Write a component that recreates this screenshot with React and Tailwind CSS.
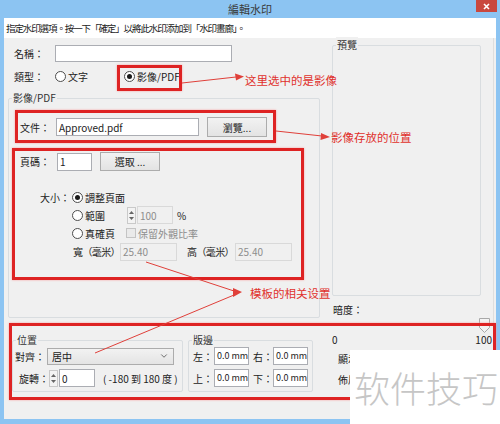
import { ChevronDown } from 'lucide-react';

const FONT = "font-['Noto_Sans_CJK_TC','Liberation_Sans',sans-serif]";

function Radio({ checked }) {
    return (
        <span className="w-[11px] h-[11px] rounded-full border border-[#4d4d4d] bg-white flex items-center justify-center shrink-0">
            {checked && <span className="w-[5px] h-[5px] rounded-full bg-[#1a1a1a]" />}
        </span>
    );
}

function Spinner() {
    return (
        <span className="w-[9px] h-[17px] border border-[#c9c9c9] bg-[#f3f3f3] flex flex-col items-center justify-center gap-[3px] shrink-0">
            <svg width="5" height="3" viewBox="0 0 5 3"><path d="M0 3 L2.5 0 L5 3 Z" fill="#666" /></svg>
            <svg width="5" height="3" viewBox="0 0 5 3"><path d="M0 0 L2.5 3 L5 0 Z" fill="#666" /></svg>
        </span>
    );
}

function Group({ label, className, children }) {
    return (
        <div className={`relative border border-[#d9dde0] rounded-[2px] ${className}`}>
            <span className="absolute left-[3px] top-[-9px] px-[1px] bg-[#f0f0f0] text-[10px] leading-[16px] text-[#333]">{label}</span>
            {children}
        </div>
    );
}

function Field({ w, children, disabled, tight }) {
    return (
        <span
            className={`h-[18px] border flex items-center shrink-0 overflow-hidden ${tight ? 'px-[2px] text-[9px]' : 'px-[2px] text-[10px]'} ${disabled ? 'bg-[#f0f0f0] border-[#d9d9d9] text-[#8d8d8d]' : 'bg-white border-[#abadb3] text-[#222]'}`}
            style={{ width: w }}
        >
            {children}
        </span>
    );
}

function Btn({ w, h, children }) {
    return (
        <span
            className="border border-[#acacac] bg-linear-to-b from-[#f2f2f2] to-[#e3e3e3] flex items-center justify-center text-[10px] text-[#222] shrink-0"
            style={{ width: w, height: h }}
        >
            {children}
        </span>
    );
}

function RedBox({ className }) {
    return <div className={`absolute border-[3px] border-[#de2323] shadow-[0_0_2px_#f7a0a0] pointer-events-none ${className}`} />;
}

export default function App() {
    return (
        <div className={`relative w-[500px] h-[424px] bg-[#8cc4f2] overflow-hidden whitespace-nowrap ${FONT} text-[#222]`}>
            {/* title bar */}
            <div className="relative h-[18px] flex items-center justify-center text-[11px] text-[#3a3a3a]">
                編輯水印
                <span className="absolute right-[3px] top-0 w-[21px] h-[12px] bg-[#c9483e] flex items-center justify-center">
                    <svg width="7" height="7" viewBox="0 0 7 7"><path d="M1 1 L6 6 M6 1 L1 6" stroke="#fff" strokeWidth="1.6" /></svg>
                </span>
            </div>

            <div className="mx-[4px] h-[401px] bg-[#f0f0f0] flex flex-col">
                <div className="h-[20px] bg-white flex items-center px-[2px] text-[9.5px] tracking-[-1.1px]">
                    指定水印選項。按一下「確定」以將此水印添加到「水印畫廊」。
                </div>

                <div className="flex flex-row">
                    {/* left column */}
                    <div className="ml-[4px] w-[312px] flex flex-col text-[10px]">
                        <div className="mt-[7px] h-[17px] flex items-center">
                            <span className="w-[47px] pl-[6px]">名稱：</span>
                            <span className="w-[177px] h-[17px] bg-white border border-[#abadb3]" />
                        </div>
                        <div className="mt-[6px] h-[17px] flex items-center">
                            <span className="w-[47px] pl-[6px]">類型：</span>
                            <span className="w-[69px] flex items-center gap-[2px]"><Radio />文字</span>
                            <span className="flex items-center gap-[2px]"><Radio checked />影像/PDF</span>
                        </div>

                        <Group label="影像/PDF" className="mt-[13px] h-[220px]">
                            <div className="mt-[18px] h-[20px] flex items-center pl-[11px]">
                                <span className="w-[36px]">文件：</span>
                                <Field w={143}>Approved.pdf</Field>
                                <span className="ml-[8px]"><Btn w={60} h={20}>瀏覽...</Btn></span>
                            </div>
                            <div className="mt-[15px] h-[19px] flex items-center pl-[11px]">
                                <span className="w-[37px]">頁碼：</span>
                                <Field w={35}>1</Field>
                                <span className="ml-[8px]"><Btn w={60} h={19}>選取 ...</Btn></span>
                            </div>
                            <div className="mt-[17px] h-[18px] flex items-center pl-[31px]">
                                <span className="w-[32px]">大小：</span>
                                <span className="flex items-center gap-[2px]"><Radio checked />調整頁面</span>
                            </div>
                            <div className="h-[18px] flex items-center pl-[63px]">
                                <span className="w-[55px] flex items-center gap-[2px]"><Radio />範圍</span>
                                <Spinner />
                                <span className="ml-[1px]"><Field w={36} disabled>100</Field></span>
                                <span className="ml-[4px]">%</span>
                            </div>
                            <div className="h-[18px] flex items-center pl-[63px]">
                                <span className="w-[54px] flex items-center gap-[2px]"><Radio />真確頁</span>
                                <span className="w-[10px] h-[10px] border border-[#c4c4c4] bg-[#eaeaea]" />
                                <span className="ml-[2px] text-[#8d8d8d]">保留外觀比率</span>
                            </div>
                            <div className="h-[19px] flex items-center pl-[64px]">
                                <span className="w-[47px] tracking-[-0.6px]">寬（毫米）</span>
                                <Field w={57} disabled>25.40</Field>
                                <span className="ml-[10px] w-[48px] tracking-[-0.6px]">高（毫米）</span>
                                <Field w={57} disabled>25.40</Field>
                            </div>
                        </Group>

                        <div className="mt-[22px] flex flex-row">
                            <Group label="位置" className="ml-[4px] w-[171px] h-[52px]">
                                <div className="mt-[6px] h-[18px] flex items-center pl-[2px]">
                                    <span className="w-[32px]">對齊：</span>
                                    <span className="w-[127px] h-[17px] border border-[#acacac] bg-linear-to-b from-[#f2f2f2] to-[#e4e4e4] flex items-center justify-between px-[4px]">
                                        居中
                                        <ChevronDown size={10} strokeWidth={2} color="#555" />
                                    </span>
                                </div>
                                <div className="mt-[4px] h-[18px] flex items-center pl-[6px]">
                                    <span className="w-[30px]">旋轉：</span>
                                    <Spinner />
                                    <span className="ml-[1px]"><Field w={36}>0</Field></span>
                                    <span className="ml-[8px]">( -180 到 180 度 )</span>
                                </div>
                            </Group>
                            <Group label="版邊" className="ml-[5px] w-[125px] h-[52px]">
                                <div className="mt-[6px] h-[18px] flex items-center pl-[4px]">
                                    <span className="w-[21px]">左：</span>
                                    <Field w={35} tight>0.0 mm</Field>
                                    <span className="ml-[4px] w-[20px]">右：</span>
                                    <Field w={35} tight>0.0 mm</Field>
                                </div>
                                <div className="mt-[4px] h-[18px] flex items-center pl-[4px]">
                                    <span className="w-[21px]">上：</span>
                                    <Field w={35} tight>0.0 mm</Field>
                                    <span className="ml-[4px] w-[20px]">下：</span>
                                    <Field w={35} tight>0.0 mm</Field>
                                </div>
                            </Group>
                        </div>
                    </div>

                    {/* right column */}
                    <div className="ml-[12px] w-[162px] flex flex-col text-[10px] border-r border-[#dedede] h-[381px]">
                        <Group label="預覽" className="mt-[7px] w-[149px] h-[251px]" />
                        <div className="mt-[6px] h-[14px] flex items-center pl-[1px]">暗度：</div>
                        <div className="h-[17px] flex items-end pl-[147px]">
                            <svg width="11" height="15" viewBox="0 0 11 15">
                                <path d="M0.5 0.5 H10.5 V9.5 L5.5 14.5 L0.5 9.5 Z" fill="#f4f4f4" stroke="#a8a8a8" />
                            </svg>
                        </div>
                        <div className="h-[13px] flex items-center justify-between pr-[1px]">
                            <span>0</span>
                            <span>100</span>
                        </div>
                        <div className="mt-[5px] h-[14px] flex items-center pl-[6px]">顯示</div>
                        <div className="mt-[7px] h-[14px] flex items-center pl-[6px]">佈局</div>
                    </div>
                </div>
            </div>

            {/* annotations */}
            <RedBox className="left-[117px] top-[65px] w-[65px] h-[26px]" />
            <RedBox className="left-[15px] top-[110px] w-[261px] h-[33px]" />
            <RedBox className="left-[12px] top-[148px] w-[292px] h-[132px]" />
            <RedBox className="left-[9px] top-[323px] w-[487px] h-[77px]" />

            <svg className="absolute left-0 top-0 pointer-events-none" width="500" height="424" viewBox="0 0 500 424">
                <g stroke="#e0403a" strokeWidth="1" fill="#e0403a">
                    <line x1="182" y1="83" x2="236" y2="77" />
                    <path d="M244 76.5 L235 73.5 L236 80.5 Z" stroke="none" />
                    <line x1="276" y1="131" x2="322" y2="136" />
                    <path d="M330 137 L321 133 L320.5 140 Z" stroke="none" />
                    <line x1="146" y1="262" x2="234" y2="291" />
                    <line x1="95" y1="353" x2="234" y2="295" />
                    <path d="M242 292 L233 288 L233 297 Z" stroke="none" />
                </g>
            </svg>

            <div className="absolute left-[245px] top-[71px] text-[11.5px] leading-[18px] text-[#e0302c] font-['Noto_Sans_CJK_SC',sans-serif]">这里选中的是影像</div>
            <div className="absolute left-[331px] top-[128px] text-[11.5px] leading-[18px] text-[#e0302c] font-['Noto_Sans_CJK_SC',sans-serif]">影像存放的位置</div>
            <div className="absolute left-[250px] top-[284px] text-[11.5px] leading-[18px] text-[#e0302c] font-['Noto_Sans_CJK_SC',sans-serif]">模板的相关设置</div>

            <div className="absolute left-[350px] top-[350px] w-[150px] h-[74px] bg-white flex items-center pl-[4px]">
                <span className="text-[36px] leading-none text-[#c6c6c6] font-['Noto_Sans_CJK_SC',sans-serif] font-light">软件技巧</span>
            </div>
        </div>
    );
}
